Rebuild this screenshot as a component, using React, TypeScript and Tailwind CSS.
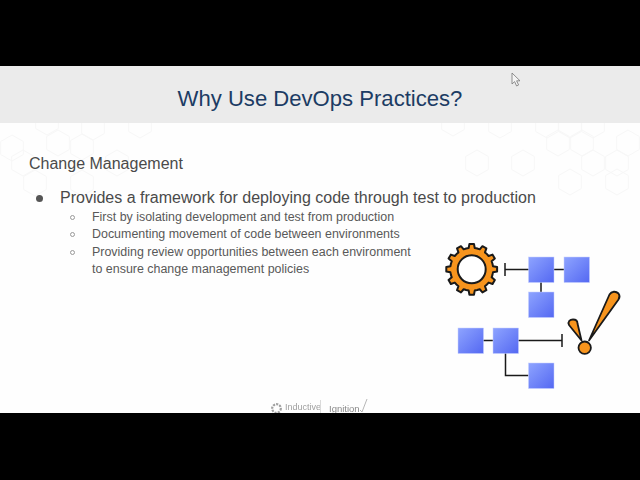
const hexes = [
  [12, 148], [58, 143], [47, 122], [93, 127], [140, 125], [23, 163], [82, 147], [35, 183], [82, 183], [117, 163],
  [453, 123], [500, 125], [547, 125], [570, 125], [593, 125], [558, 143], [582, 143], [628, 143],
  [477, 163], [523, 163], [593, 163], [617, 163], [570, 182], [617, 182],
];

const hexPoints = (cx: number, cy: number, r = 13) =>
  [0, 1, 2, 3, 4, 5]
    .map((i) => {
      const a = (Math.PI / 3) * i + Math.PI / 6;
      return `${(cx + r * Math.cos(a)).toFixed(1)},${(cy + r * Math.sin(a)).toFixed(1)}`;
    })
    .join(' ');

// 12 tooth gear outline around 0,0
const gearPath = () => {
  const teeth = 12;
  const pts: string[] = [];
  for (let i = 0; i < teeth; i++) {
    const step = (Math.PI * 2) / teeth;
    const a = i * step;
    const offsets: [number, number][] = [
      [-0.5, 21.5],
      [-0.27, 21.5],
      [-0.17, 25.5],
      [0.17, 25.5],
      [0.27, 21.5],
    ];
    offsets.forEach(([o, r]) => {
      const t = a + o * step;
      pts.push(`${(r * Math.cos(t)).toFixed(2)} ${(r * Math.sin(t)).toFixed(2)}`);
    });
  }
  return `M${pts.join('L')}Z`;
};

const squares = [
  [528.5, 257],
  [564, 257],
  [528.5, 292],
  [458, 328],
  [493, 328],
  [528.5, 363],
];

const Diagram = () => (
  <svg width="185" height="152" viewBox="440 240 185 152" className="shrink-0">
    <defs>
      <linearGradient id="sq" x1="0" y1="0" x2="1" y2="1">
        <stop offset="0" stopColor="#8ea4ff" />
        <stop offset="1" stopColor="#5468f2" />
      </linearGradient>
    </defs>
    <g stroke="#1a1a1a" strokeWidth="1.5" fill="none">
      <path d="M505 269.5H564M505 263V276M541 282V292" />
      <path d="M483 340.5H562M562 334V347M505.5 353V375.5H528.5" />
    </g>
    {squares.map(([x, y]) => (
      <rect key={`${x}-${y}`} x={x} y={y} width="25.5" height="25.5" fill="url(#sq)" stroke="#c5cfff" strokeWidth="0.5" />
    ))}
    <g transform="translate(471.7 269.3)">
      <path d={gearPath()} fill="#f7941d" stroke="#1a1a1a" strokeWidth="2" strokeLinejoin="round" />
      <circle r="14" fill="#ffffff" stroke="#1a1a1a" strokeWidth="2" />
    </g>
    <g fill="#f7941d" stroke="#1a1a1a" strokeWidth="1.8" strokeLinejoin="round">
      <path d="M589 340.5L609.5 294.5C611.5 291 616 291 618.5 293.5C620 295.5 619.5 298 618.5 299.5Z" />
      <path d="M581.5 340.5L569 325C567.5 321.5 570 319.5 573 319.5C576 319.5 577.5 321.5 577.5 323.5Z" />
      <circle cx="584.7" cy="347.7" r="6.2" />
    </g>
  </svg>
);

const Cursor = () => (
  <svg width="11" height="15" viewBox="0 0 11 15" className="absolute left-[511px] top-[6px]">
    <path d="M1 1V12L3.6 9.6L5.6 14L7.6 13L5.6 8.8H9Z" fill="#f4f4f4" stroke="#777777" strokeWidth="0.8" />
  </svg>
);

const subItems = [
  'First by isolating development and test from production',
  'Documenting movement of code between environments',
  'Providing review opportunities between each environment to ensure change management policies',
];

export default function App() {
  return (
    <div className="w-[640px] h-[480px] bg-black overflow-hidden font-['Liberation_Sans',Arial,sans-serif] flex flex-col">
      <div className="h-[66px] shrink-0" />
      <div className="relative h-[57px] shrink-0 bg-[#ebebeb] flex items-center justify-center pt-[10px]">
        <h1 className="text-[22.1px] leading-none text-[#1c3c64]">Why Use DevOps Practices?</h1>
        <Cursor />
      </div>
      <div className="relative h-[290px] shrink-0 bg-[#fefefe] overflow-hidden flex flex-col">
        <svg width="640" height="290" viewBox="0 123 640 290" className="absolute inset-0">
          {hexes.map(([x, y]) => (
            <polygon key={`${x}-${y}`} points={hexPoints(x, y)} fill="none" stroke="#f7f7f7" strokeWidth="1" />
          ))}
        </svg>
        <div className="relative flex flex-col flex-1 pl-[29px]">
          <h2 className="mt-[32px] text-[16px] leading-[18px] text-[#4a4a4a]">Change Management</h2>
          <div className="mt-[16px] flex items-center text-[16px] leading-[18px] text-[#4a4a4a]">
            <span className="ml-[7px] w-[7px] h-[7px] rounded-full bg-[#555555]" />
            <span className="ml-[17px] whitespace-nowrap">
              Provides a framework for deploying code through test to production
            </span>
          </div>
          <div className="flex justify-between pr-[15px]">
            <ul className="w-[345px] ml-[41px] text-[12.45px] leading-[17.3px] text-[#595959] mt-[2px] flex flex-col">
              {subItems.map((t) => (
                <li key={t} className="flex">
                  <span className="w-[5px] h-[5px] mt-[6px] shrink-0 rounded-full border border-[#999999]" />
                  <span className="ml-[17px]">{t}</span>
                </li>
              ))}
            </ul>
            <div className="mt-[33px]">
              <Diagram />
            </div>
          </div>
          <div className="absolute left-[270px] bottom-0 flex items-end gap-[2px] h-[16px] overflow-hidden blur-[0.4px] opacity-70">
            <svg width="13" height="13" viewBox="0 0 12 12" className="mb-[-2px]">
              <circle cx="6" cy="6" r="4" fill="none" stroke="#777777" strokeWidth="2" strokeDasharray="2 1" />
            </svg>
            <div className="text-[9px] leading-[9px] text-[#777777] mb-[1px] w-[30px] whitespace-nowrap">Inductive</div>
            <div className="w-px h-[13px] bg-[#cccccc] ml-[3px] mr-[6px]" />
            <div className="text-[9.5px] leading-[11px] text-[#555555] mb-[-1px]">Ignition</div>
            <svg width="9" height="15" viewBox="0 0 9 15" className="ml-[-3px]">
              <path d="M1 12L3 14L8 1" fill="none" stroke="#999999" strokeWidth="1" />
            </svg>
          </div>
        </div>
      </div>
      <div className="flex-1" />
    </div>
  );
}
